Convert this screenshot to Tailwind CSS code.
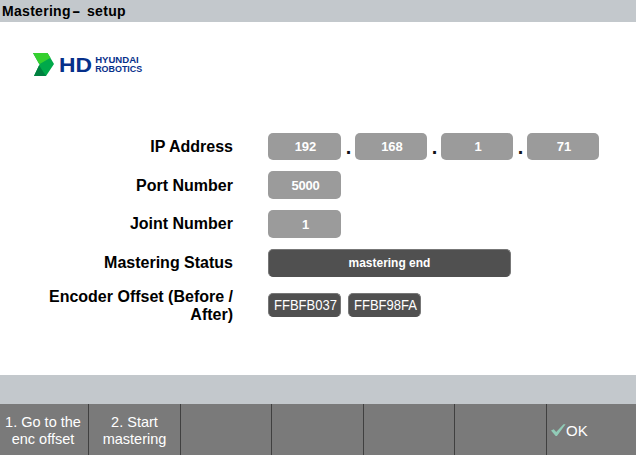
<!DOCTYPE html>
<html lang="en">
<head>
<meta charset="utf-8">
<title>Mastering - setup</title>
<script src="https://cdn.jsdelivr.net/npm/@tailwindcss/browser@4"></script>
</head>
<body class="w-[636px] h-[455px] overflow-hidden flex flex-col bg-white text-black font-['Liberation_Sans',Arial,sans-serif]">
<header class="h-[22px] shrink-0 flex bg-[#c3c8cc] pl-[2px] text-[14px] leading-[23px] font-bold whitespace-pre tracking-[0.3px]"><span class="w-[70px]">Mastering</span><span class="w-[14px] origin-left scale-x-[1.8]">-</span><span class="ml-px">setup</span></header>
<main class="h-[353px] shrink-0 pt-[31px]">
  <svg class="block ml-[33px] w-[112px] h-[24px]" viewBox="0 0 112 24">
    <path d="M0 0H14.5L21 11L13 23H1L6.5 11.5Z" fill="#00a94a"/>
    <path d="M0 0H14.5L17.5 4.8L6.3 11.3Z" fill="#35d02f"/>
    <path d="M6.5 13L13 23H1L6 12.5Z" fill="#008040"/>
    <g fill="#06308a" font-family="'Liberation Sans', Arial, sans-serif" font-weight="bold">
      <text x="26" y="18.7" font-size="21" textLength="33" lengthAdjust="spacingAndGlyphs">HD</text>
      <text x="62.2" y="10.4" font-size="8.8" textLength="43.5" lengthAdjust="spacingAndGlyphs">HYUNDAI</text>
      <text x="62.2" y="18.9" font-size="8.8" textLength="47" lengthAdjust="spacingAndGlyphs">ROBOTICS</text>
    </g>
  </svg>
  <div class="mt-[56px] flex flex-col text-[16px] leading-[18px] font-bold">
    <div class="flex h-[27px] items-center">
      <div class="w-[233px] mr-[35px] text-right">IP Address</div>
      <div class="flex h-[27px] text-[13px] leading-[27px] text-center text-white">
        <div class="w-[73px] rounded-[5px] bg-[#9b9b9b] pl-[2px]">192</div>
        <div class="w-[14px] text-[#101018] text-[20px] leading-[29px] pl-px">.</div>
        <div class="w-[72px] rounded-[5px] bg-[#9b9b9b] pl-[2px]">168</div>
        <div class="w-[14px] text-[#101018] text-[20px] leading-[29px] pl-px">.</div>
        <div class="w-[72px] rounded-[5px] bg-[#9b9b9b] pl-[2px]">1</div>
        <div class="w-[14px] text-[#101018] text-[20px] leading-[29px] pl-px">.</div>
        <div class="w-[72px] rounded-[5px] bg-[#9b9b9b] pl-[2px]">71</div>
      </div>
    </div>
    <div class="flex h-[28px] mt-[11px] items-center">
      <div class="w-[233px] mr-[35px] pt-[2px] text-right">Port Number</div>
      <div class="w-[73px] h-[28px] rounded-[5px] bg-[#9b9b9b] pl-[2px] text-[13px] leading-[29px] text-center text-white tracking-[-0.2px]">5000</div>
    </div>
    <div class="flex h-[28px] mt-[11px] items-center">
      <div class="w-[233px] mr-[35px] text-right">Joint Number</div>
      <div class="w-[73px] h-[28px] rounded-[5px] bg-[#9b9b9b] pl-[2px] text-[13px] leading-[29px] text-center text-white">1</div>
    </div>
    <div class="flex h-[28px] mt-[11px] items-center">
      <div class="w-[233px] mr-[35px] text-right">Mastering Status</div>
      <div class="w-[243px] h-[28px] rounded-[5px] bg-[#505050] border border-[#777] border-b-[#505050] text-[13px] leading-[26px] text-center text-white"><span class="inline-block scale-x-[0.92]">mastering end</span></div>
    </div>
    <div class="flex h-[36px] mt-[10px] items-center">
      <div class="w-[233px] mr-[35px] pt-[2px] text-right">Encoder Offset (Before /<br>After)</div>
      <div class="flex gap-[7px] text-[14px] leading-[23px] font-normal text-white">
        <div class="w-[73px] h-[24px] rounded-[5px] bg-[#505050] border border-[#777] border-b-[#505050] pl-[5px]"><span class="inline-block origin-left scale-x-[0.93]">FFBFB037</span></div>
        <div class="w-[73px] h-[24px] rounded-[5px] bg-[#505050] border border-[#777] border-b-[#505050] pl-[5px]"><span class="inline-block origin-left scale-x-[0.93]">FFBF98FA</span></div>
      </div>
    </div>
  </div>
</main>
<div class="h-[29px] shrink-0 bg-[#c3c8cc]"></div>
<footer class="h-[51px] shrink-0 flex bg-[#7a7a7a] text-white text-[14.5px] leading-[17px] text-center">
  <div class="w-[89px] pr-[2px] flex items-center justify-center pt-[2px] border-r border-[#404040] whitespace-nowrap">1. Go to the<br>enc offset</div>
  <div class="w-[92px] flex items-center justify-center pt-[2px] border-r border-[#404040]">2. Start<br>mastering</div>
  <div class="w-[91px] border-r border-[#404040]"></div>
  <div class="w-[92px] border-r border-[#404040]"></div>
  <div class="w-[91px] border-r border-[#404040]"></div>
  <div class="w-[92px] border-r border-[#404040]"></div>
  <div class="flex-1 flex items-center pl-[4px] pt-[2px]">
    <svg class="w-[15px] h-[13px]" viewBox="0 0 15 13"><path d="M0 6.5L2.8 5.3L5.2 8L12.5 0.3H14.6L5.9 12H4.7Z" fill="#91cbb7"/></svg>
    <span class="text-[15px]">OK</span>
  </div>
</footer>
</body>
</html>
